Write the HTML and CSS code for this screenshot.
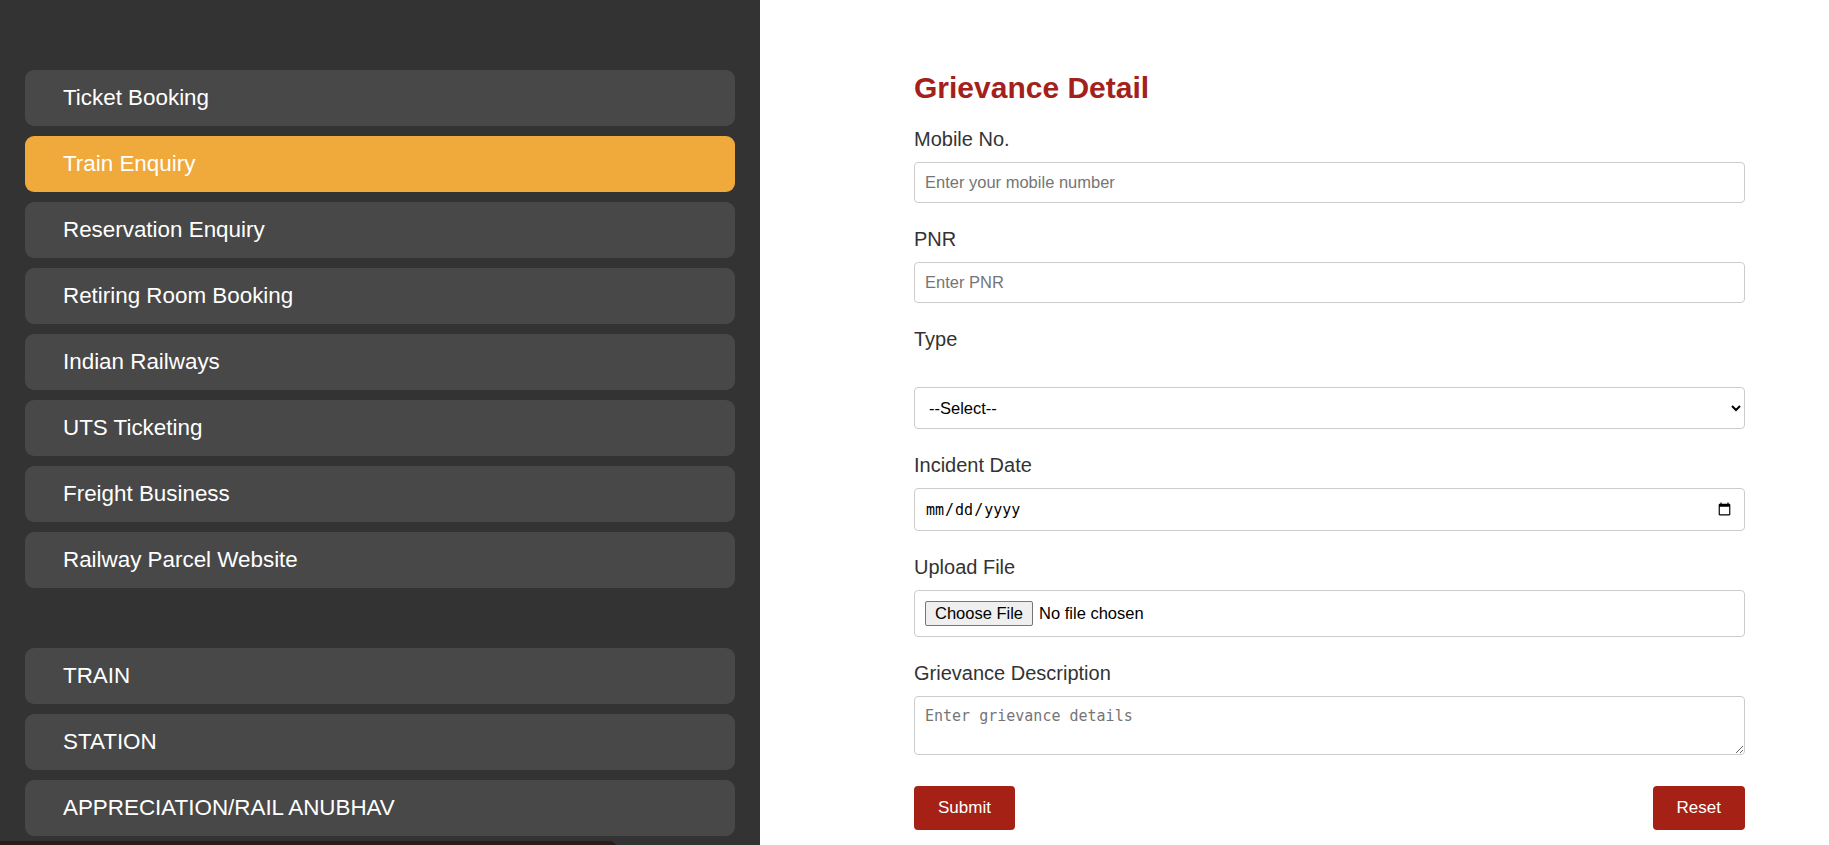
FILE: index.html
```html
<!DOCTYPE html>
<html lang="en">
<head>
<meta charset="utf-8">
<title>Grievance Detail</title>
<link rel="stylesheet" href="styles.css">
</head>
<body>
<div class="page">
  <aside class="sidebar">
    <ul class="nav">
      <li class="nav-item">Ticket Booking</li>
      <li class="nav-item active">Train Enquiry</li>
      <li class="nav-item">Reservation Enquiry</li>
      <li class="nav-item">Retiring Room Booking</li>
      <li class="nav-item">Indian Railways</li>
      <li class="nav-item">UTS Ticketing</li>
      <li class="nav-item">Freight Business</li>
      <li class="nav-item">Railway Parcel Website</li>
    </ul>
    <ul class="nav nav-second">
      <li class="nav-item">TRAIN</li>
      <li class="nav-item">STATION</li>
      <li class="nav-item">APPRECIATION/RAIL ANUBHAV</li>
    </ul>
    <div class="sidebar-footer"></div>
  </aside>
  <main class="main">
    <form class="form">
      <h2 class="title">Grievance Detail</h2>
      <div class="group">
        <label class="label" for="mobile">Mobile No.</label>
        <input class="field" id="mobile" type="text" placeholder="Enter your mobile number">
      </div>
      <div class="group">
        <label class="label" for="pnr">PNR</label>
        <input class="field" id="pnr" type="text" placeholder="Enter PNR">
      </div>
      <div class="group">
        <label class="label" for="type">Type</label>
        <select class="field select" id="type">
          <option>--Select--</option>
        </select>
      </div>
      <div class="group">
        <label class="label" for="date">Incident Date</label>
        <input class="field date" id="date" type="date">
      </div>
      <div class="group">
        <label class="label" for="file">Upload File</label>
        <input class="field file" id="file" type="file">
      </div>
      <div class="group">
        <label class="label" for="desc">Grievance Description</label>
        <textarea class="field textarea" id="desc" placeholder="Enter grievance details"></textarea>
      </div>
      <div class="actions">
        <button type="button" class="btn">Submit</button>
        <button type="button" class="btn">Reset</button>
      </div>
    </form>
  </main>
</div>
</body>
</html>
```
FILE: styles.css
```css
html, body {
  margin: 0;
  padding: 0;
  height: 100%;
  overflow: hidden;
}
body {
  font-family: "Liberation Sans", Arial, sans-serif;
  background: #fff;
}
.page {
  display: flex;
  height: 100vh;
  overflow: hidden;
}
.sidebar {
  width: 760px;
  flex: 0 0 760px;
  background: #333333;
  box-sizing: border-box;
  padding: 70px 25px 0 25px;
  display: flex;
  flex-direction: column;
}
.nav {
  list-style: none;
  margin: 0;
  padding: 0;
  display: flex;
  flex-direction: column;
  gap: 10px;
}
.nav-second {
  margin-top: 60px;
}
.nav-item {
  box-sizing: border-box;
  height: 56px;
  background: #484848;
  border-radius: 9px;
  color: #ffffff;
  font-size: 22.4px;
  line-height: 25px;
  display: flex;
  align-items: center;
  padding: 0 0 2px 38px;
}
.nav-item.active {
  background: #f0a93b;
}
.sidebar-footer {
  margin-top: 5px;
  margin-left: -25px;
  width: 617px;
  height: 30px;
  flex: 0 0 30px;
  background: #2e1a16;
  border-radius: 0 8px 0 0;
}
.main {
  flex: 1;
  box-sizing: border-box;
  padding: 70px 84px 0 154px;
}
.form {
  display: flex;
  flex-direction: column;
}
.title {
  margin: 0 0 21px 0;
  font-size: 30px;
  line-height: 36px;
  font-weight: bold;
  color: #a3211a;
}
.group {
  display: flex;
  flex-direction: column;
  margin-bottom: 24px;
}
.label {
  font-size: 20px;
  line-height: 24px;
  color: #333333;
  margin-bottom: 11px;
}
.field {
  box-sizing: border-box;
  width: 100%;
  height: 41px;
  border: 1px solid #cccccc;
  border-radius: 4px;
  padding: 0 10px;
  font-family: "Liberation Sans", Arial, sans-serif;
  font-size: 16.5px;
  color: #000;
  background: #fff;
  margin: 0;
}
.field::placeholder {
  color: #757575;
}
.select {
  height: 42px;
  margin-top: 25px;
  padding-left: 10px;
  font-size: 16.5px;
}
.date {
  height: 43px;
  font-family: "DejaVu Sans Mono", "Liberation Mono", monospace;
  font-size: 15px;
}
.file {
  height: 47px;
  padding: 10px;
  font-size: 16.5px;
}
.file::file-selector-button {
  font-family: "Liberation Sans", Arial, sans-serif;
  font-size: 16.5px;
  line-height: 19px;
  padding: 2px 9px;
  margin-right: 6px;
  border: 1px solid #767676;
  border-radius: 2px;
  background: #efefef;
  color: #000;
}
.textarea {
  height: 59px;
  padding: 10px;
  font-family: "DejaVu Sans Mono", "Liberation Mono", monospace;
  font-size: 15px;
  resize: vertical;
}
.actions {
  display: flex;
  justify-content: space-between;
  margin-top: 7px;
}
.btn {
  background: #a52116;
  color: #ffffff;
  border: none;
  border-radius: 4px;
  font-family: "Liberation Sans", Arial, sans-serif;
  font-size: 17px;
  line-height: 20px;
  padding: 12px 24px;
}
```
